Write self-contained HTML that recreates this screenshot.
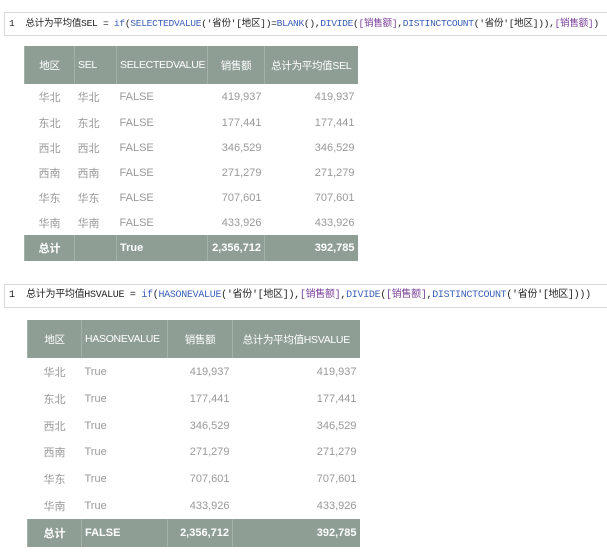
<!DOCTYPE html>
<html><head><meta charset="utf-8"><style>
body{margin:0;width:607px;height:557px;background:#fff;position:relative;overflow:hidden;font-family:"Liberation Sans","Noto Sans CJK SC",sans-serif}
.f{position:absolute;left:4px;right:-2px;border:1px solid #d8d8d8;height:22px;line-height:22px;font-family:"Liberation Mono","Noto Sans CJK SC",monospace;font-size:9.6px;color:#222;white-space:nowrap;overflow:hidden;padding-left:4px;letter-spacing:-0.3px}
.b{color:#3a5fb8}.p{color:#7a3f9a}
table{position:absolute;border-collapse:collapse;font-size:11px;table-layout:fixed}
td,th{padding:0 3px;white-space:nowrap;vertical-align:middle;overflow:hidden}
th{background:#8f9e95;color:#fff;font-weight:normal;border-left:1px solid #a4b0a8;font-size:10.5px;letter-spacing:-0.3px}
td{color:#999}
tr.t td{background:#8f9e95;color:#fff;font-weight:bold;border-left:1px solid #a4b0a8;font-size:11px}
.r{text-align:right}.c{text-align:center}
</style></head><body>
<div class="f" style="top:12px">1&nbsp; 总计为平均值SEL = <span class="b">if</span>(<span class="b">SELECTEDVALUE</span>('省份'[地区])=<span class="b">BLANK</span>(),<span class="b">DIVIDE</span>(<span class="p">[销售额]</span>,<span class="b">DISTINCTCOUNT</span>('省份'[地区])),<span class="p">[销售额]</span>)</div>
<table style="left:24px;top:46px;width:333px">
<colgroup><col style="width:50px"><col style="width:42px"><col style="width:91px"><col style="width:57px"><col style="width:93px"></colgroup>
<tr style="height:38px"><th class="c">地区</th><th style="text-align:left">SEL</th><th style="text-align:left">SELECTEDVALUE</th><th class="c">销售额</th><th class="c">总计为平均值SEL</th></tr>
<tr style="height:26px"><td class="c">华北</td><td>华北</td><td>FALSE</td><td class="r">419,937</td><td class="r">419,937</td></tr>
<tr style="height:25px"><td class="c">东北</td><td>东北</td><td>FALSE</td><td class="r">177,441</td><td class="r">177,441</td></tr>
<tr style="height:25px"><td class="c">西北</td><td>西北</td><td>FALSE</td><td class="r">346,529</td><td class="r">346,529</td></tr>
<tr style="height:25px"><td class="c">西南</td><td>西南</td><td>FALSE</td><td class="r">271,279</td><td class="r">271,279</td></tr>
<tr style="height:25px"><td class="c">华东</td><td>华东</td><td>FALSE</td><td class="r">707,601</td><td class="r">707,601</td></tr>
<tr style="height:25px"><td class="c">华南</td><td>华南</td><td>FALSE</td><td class="r">433,926</td><td class="r">433,926</td></tr>
<tr class="t" style="height:26px"><td class="c">总计</td><td></td><td>True</td><td class="r">2,356,712</td><td class="r">392,785</td></tr>
</table>
<div class="f" style="top:284px;font-size:10px">1&nbsp; 总计为平均值HSVALUE = <span class="b">if</span>(<span class="b">HASONEVALUE</span>('省份'[地区]),<span class="p">[销售额]</span>,<span class="b">DIVIDE</span>(<span class="p">[销售额]</span>,<span class="b">DISTINCTCOUNT</span>('省份'[地区])))</div>
<table style="left:27px;top:320px;width:332px">
<colgroup><col style="width:54px"><col style="width:86px"><col style="width:65px"><col style="width:127px"></colgroup>
<tr style="height:38px"><th class="c">地区</th><th style="text-align:left">HASONEVALUE</th><th class="c">销售额</th><th class="c">总计为平均值HSVALUE</th></tr>
<tr style="height:27px"><td class="c">华北</td><td>True</td><td class="r">419,937</td><td class="r">419,937</td></tr>
<tr style="height:27px"><td class="c">东北</td><td>True</td><td class="r">177,441</td><td class="r">177,441</td></tr>
<tr style="height:27px"><td class="c">西北</td><td>True</td><td class="r">346,529</td><td class="r">346,529</td></tr>
<tr style="height:26px"><td class="c">西南</td><td>True</td><td class="r">271,279</td><td class="r">271,279</td></tr>
<tr style="height:27px"><td class="c">华东</td><td>True</td><td class="r">707,601</td><td class="r">707,601</td></tr>
<tr style="height:27px"><td class="c">华南</td><td>True</td><td class="r">433,926</td><td class="r">433,926</td></tr>
<tr class="t" style="height:28px"><td class="c">总计</td><td>FALSE</td><td class="r">2,356,712</td><td class="r">392,785</td></tr>
</table>
</body></html>
